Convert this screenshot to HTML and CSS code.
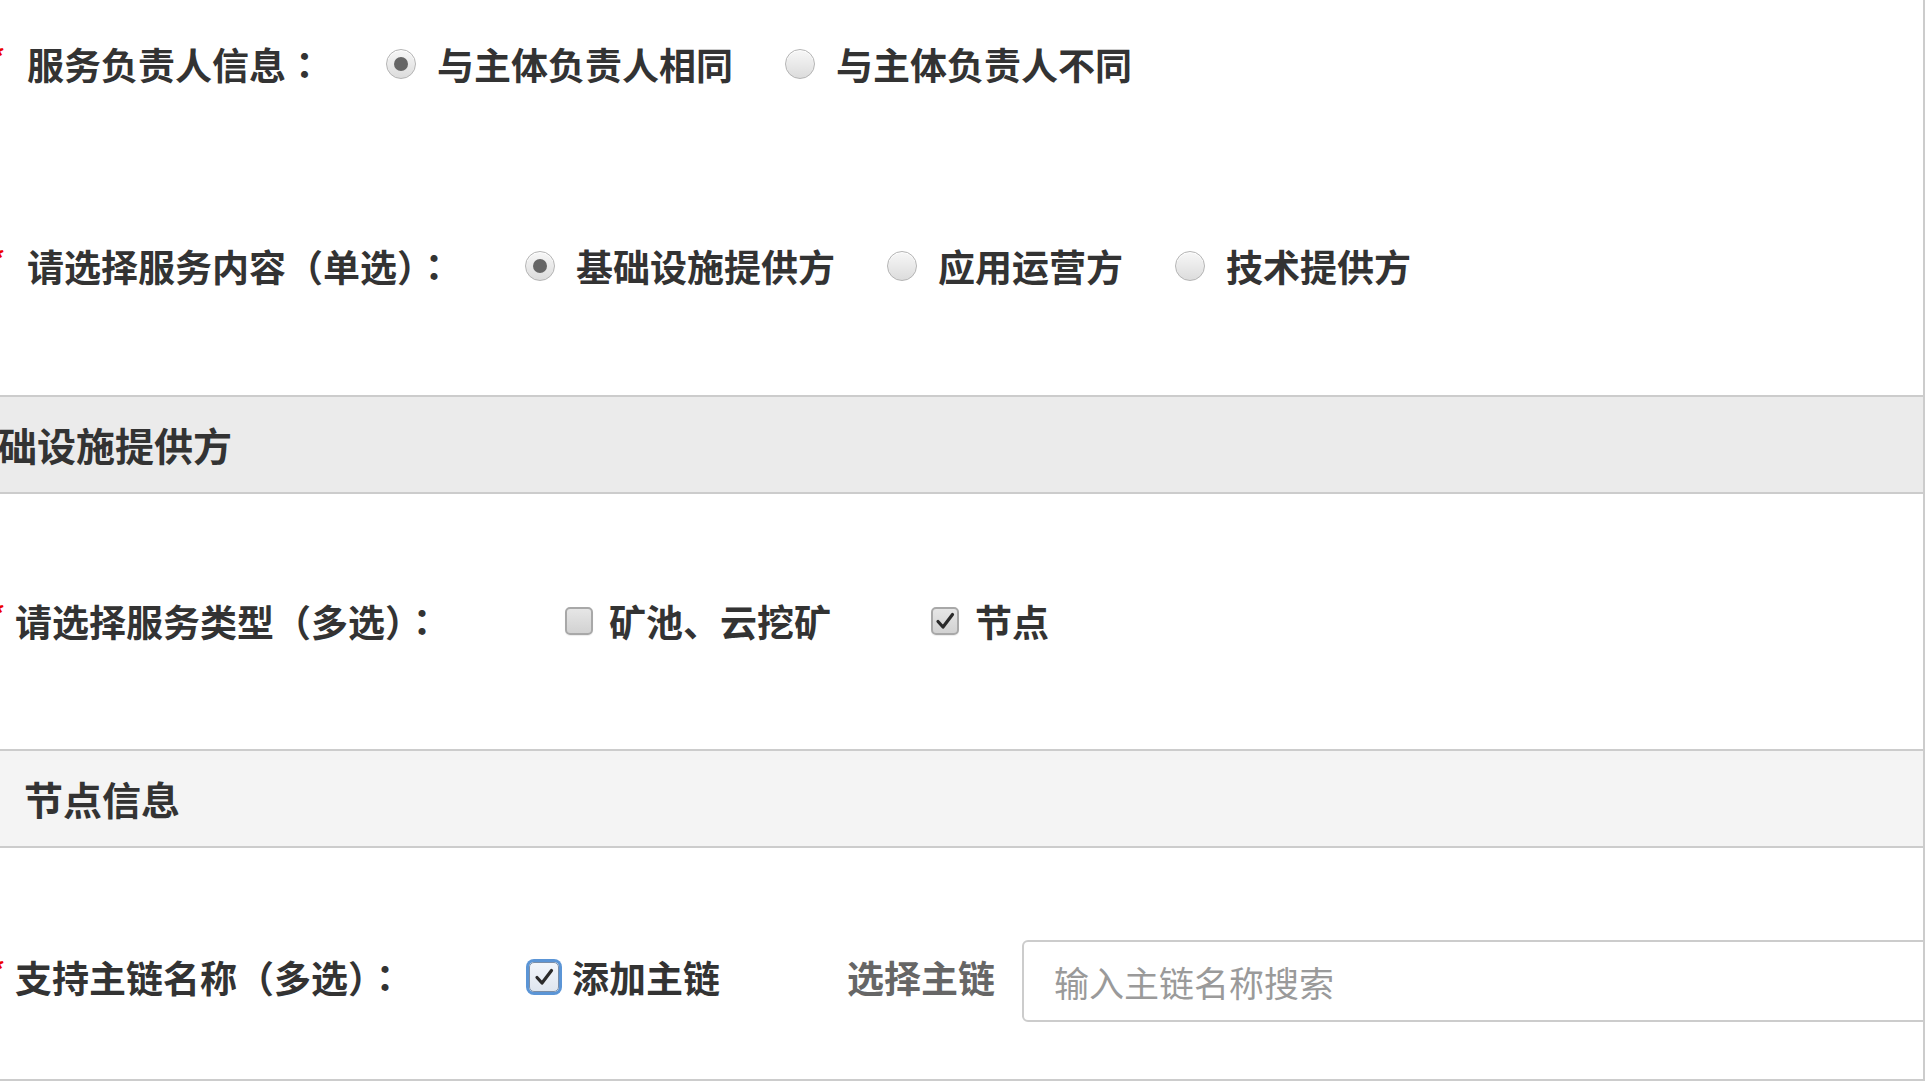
FILE: index.html
```html
<!DOCTYPE html>
<html lang="zh-CN">
<head>
    <meta charset="UTF-8">
    <meta name="viewport" content="width=device-width, initial-scale=1.0">
    <title>服务信息</title>
    <link rel="stylesheet" href="styles.css">
</head>
<body>
    <div class="panel">
        <!-- 负责人 / 服务内容 -->
        <div class="group group-top">
            <div class="field">
                <span class="req">*</span>
                <span class="label label-wide label-owner">服务负责人信息<span class="colon" lang="zh-TW">：</span></span>
                <div class="choices">
                    <label class="choice"><span class="radio checked"></span>与主体负责人相同</label>
                    <label class="choice"><span class="radio"></span>与主体负责人不同</label>
                </div>
            </div>
            <div class="field field-next">
                <span class="req">*</span>
                <span class="label label-wide label-content">请选择服务内容（单选）<span class="colon" lang="zh-TW">：</span></span>
                <div class="choices">
                    <label class="choice"><span class="radio checked"></span>基础设施提供方</label>
                    <label class="choice"><span class="radio"></span>应用运营方</label>
                    <label class="choice"><span class="radio"></span>技术提供方</label>
                </div>
            </div>
        </div>

        <div class="section-title section-infra">基础设施提供方</div>

        <div class="group">
            <div class="field">
                <span class="req">*</span>
                <span class="label label-type">请选择服务类型（多选）<span class="colon" lang="zh-TW">：</span></span>
                <div class="choices">
                    <label class="choice choice-check"><span class="checkbox"></span>矿池、云挖矿</label>
                    <label class="choice choice-check"><span class="checkbox checked"><svg viewBox="0 0 28 28"><path d="M7 14.5 L12 20 L21.5 7.5"/></svg></span>节点</label>
                </div>
            </div>
        </div>

        <div class="section-title section-node">节点信息</div>

        <div class="group group-last">
            <div class="field">
                <span class="req">*</span>
                <span class="label label-chain">支持主链名称（多选）<span class="colon" lang="zh-TW">：</span></span>
                <label class="choice choice-add"><span class="checkbox checked focused"><svg viewBox="0 0 28 28"><path d="M7 14.5 L12 20 L21.5 7.5"/></svg></span>添加主链</label>
                <span class="sub-label">选择主链</span>
                <input class="search" type="text" placeholder="输入主链名称搜索">
            </div>
        </div>
    </div>
</body>
</html>
```

FILE: styles.css
```css
body {
    margin: 0;
    background-color: #fff;
    font-family: "Noto Sans CJK SC", "Noto Sans", sans-serif;
    color: #333;
    overflow: hidden;
}
.panel {
    box-sizing: border-box;
    width: 1985px;
    margin-left: -60px;
    border-right: 2px solid #ccc;
    border-bottom: 2px solid #ccc;
    overflow: hidden;
}
.group {
    padding-top: 63px;
    padding-bottom: 64px;
}
.group-top {
    padding-top: 0;
    padding-bottom: 65px;
}
.group-last {
    padding-top: 65px;
    padding-bottom: 38px;
}
.field {
    display: flex;
    align-items: center;
    height: 128px;
    padding-left: 45px;
    font-size: 37px;
    font-weight: bold;
}
.field-next {
    margin-top: 74px;
}
.req {
    align-self: flex-start;
    width: 20px;
    margin-top: 42px;
    text-align: right;
    color: #e00;
    font-size: 28px;
    line-height: 28px;
}
.label {
    margin-left: 10px;
    white-space: nowrap;
}
.label-wide {
    margin-left: 22px;
}
.colon {
    font-family: "Noto Sans CJK TC", "Noto Sans CJK SC", sans-serif;
}
.label-owner { width: 359px; }
.label-content { width: 498px; }
.label-type { width: 550px; }
.label-chain { width: 514px; }
.choices {
    display: flex;
    align-items: center;
}
.choice {
    display: flex;
    align-items: center;
    margin-right: 52px;
    white-space: nowrap;
}
.choice-check {
    margin-right: 100px;
}
.radio {
    box-sizing: border-box;
    width: 30px;
    height: 30px;
    margin-right: 21px;
    border: 1px solid #b4b4b4;
    border-radius: 50%;
    background: linear-gradient(#f7f7f7, #dcdcdc);
    box-shadow: inset 0 1px 1px #fff;
    position: relative;
}
.radio.checked::after {
    content: "";
    position: absolute;
    left: 7px;
    top: 7px;
    width: 14px;
    height: 14px;
    border-radius: 50%;
    background-color: #666;
}
.checkbox {
    box-sizing: border-box;
    width: 28px;
    height: 28px;
    margin-right: 16px;
    border: 2px solid #a8a8a8;
    border-radius: 5px;
    background: linear-gradient(#e6e6e6, #d2d2d2);
    box-shadow: 0 1px 1px rgba(0,0,0,0.08);
}
.checkbox svg {
    display: block;
    width: 28px;
    height: 28px;
    margin: -2px;
}
.checkbox svg path {
    fill: none;
    stroke: #2b2b2b;
    stroke-width: 3.2;
    stroke-linecap: round;
    stroke-linejoin: round;
}
.checkbox.focused {
    width: 30px;
    height: 30px;
    border: 1px solid #7a8ea8;
    background: linear-gradient(#f2f6fb, #dfe6ef);
    box-shadow: 0 0 0 3px #5b95d6;
}
.checkbox.focused svg {
    margin: 0;
}
.choice-add {
    margin-right: 127px;
}
.choice-add .checkbox {
    margin-right: 13px;
}
.sub-label {
    margin-right: 27px;
    color: #666;
    white-space: nowrap;
}
.search {
    flex: 1;
    box-sizing: border-box;
    height: 82px;
    margin-right: -60px;
    margin-top: 8px;
    padding: 0 30px;
    border: 2px solid #ccc;
    border-radius: 6px;
    font-family: "Noto Sans CJK SC", "Noto Sans", sans-serif;
    font-size: 35px;
    color: #333;
    outline: none;
}
.search::placeholder {
    color: #9a9a9a;
}
.section-title {
    height: 95px;
    line-height: 95px;
    border-top: 2px solid #ccc;
    border-bottom: 2px solid #ccc;
    font-size: 39px;
    font-weight: bold;
    white-space: nowrap;
}
.section-infra {
    padding-left: 19px;
    background-color: #ebebeb;
}
.section-node {
    padding-left: 84px;
    background-color: #f4f4f4;
}
```
